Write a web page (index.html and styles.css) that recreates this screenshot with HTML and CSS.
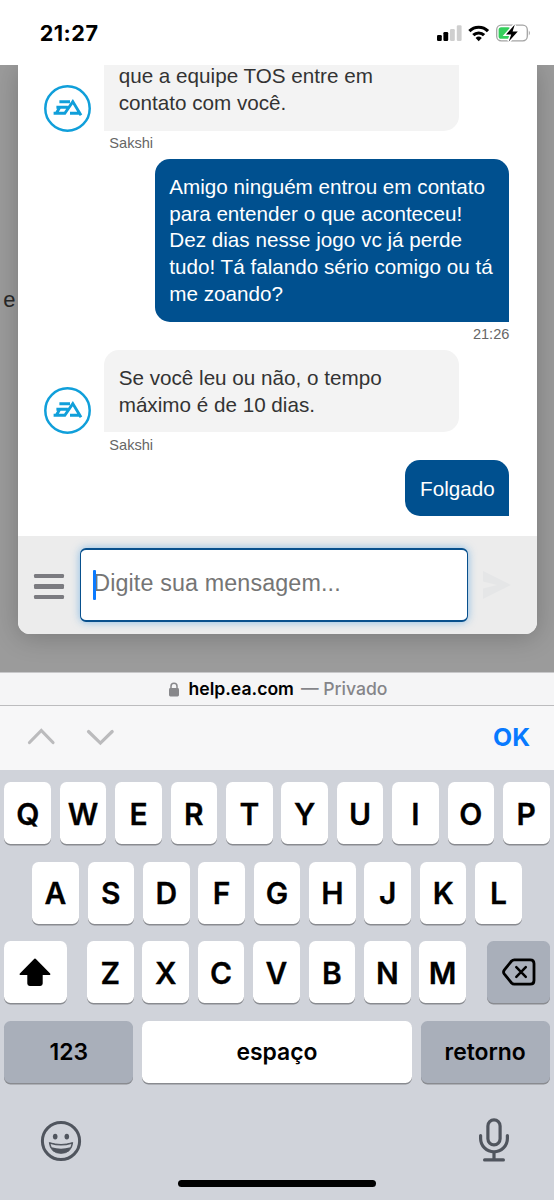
FILE: index.html
```html
<!DOCTYPE html>
<html lang="pt-BR">
<head>
<meta charset="utf-8">
<title>help.ea.com</title>
<link rel="stylesheet" href="styles.css">
</head>
<body>
<svg class="defs" width="0" height="0">
  <symbol id="ea" viewBox="0 0 47 47">
    <circle cx="23.5" cy="23.5" r="22.2" fill="#fff" stroke="#109fda" stroke-width="2.5"/>
    <path d="M15.4 16.8H26M12.4 22.2H23.8M15.8 22.2L12.3 28.2M9.6 28.2H20.8L28.8 16.6L37 30.3M26 28.2H35" fill="none" stroke="#109fda" stroke-width="2.9"/>
  </symbol>
</svg>
<div class="phone">
  <header class="status">
    <div class="clock">21:27</div>
    <svg class="indicators" width="98" height="24" viewBox="434 21 98 24">
      <rect x="437" y="35" width="4.8" height="6" rx="1.2"/>
      <rect x="443.4" y="32" width="4.8" height="9" rx="1.2"/>
      <rect x="450" y="29" width="4.8" height="12" rx="1.2" fill="#cfcfcf"/>
      <rect x="456.8" y="25.3" width="4.8" height="15.7" rx="1.2" fill="#cfcfcf"/>
      <g fill="none" stroke="#000" stroke-width="3.2">
        <path d="M469.4 31.1A13.2 13.2 0 0 1 488 31.1"/>
        <path d="M473.3 35.2A7.7 7.7 0 0 1 484.1 35.2"/>
      </g>
      <path d="M475.6 38Q478.7 35.2 481.8 38L478.7 41.2Z"/>
      <rect x="496.7" y="25.2" width="30.6" height="15.6" rx="4.5" fill="#fff" stroke="#a4a4a4" stroke-width="1.3"/>
      <path d="M528.8 30.5Q531 33 528.8 35.5Z" fill="#a4a4a4"/>
      <rect x="498.6" y="27.2" width="12" height="11.6" rx="2.6" fill="#34cf5c"/>
      <path d="M514.8 24.6L506 34.6H511.2L508.8 41.6L517.8 31.4H512.6Z" stroke="#fff" stroke-width="3"/>
      <path d="M514.8 24.6L506 34.6H511.2L508.8 41.6L517.8 31.4H512.6Z"/>
    </svg>
  </header>

  <main class="web">
    <div class="behind">e</div>
    <section class="panel">
      <div class="messages">
        <div class="row">
          <svg class="avatar"><use href="#ea"/></svg>
          <p class="bubble agent">que a equipe TOS entre em<br>contato com você.</p>
        </div>
        <div class="meta agent-name">Sakshi</div>
        <p class="bubble me">Amigo ninguém entrou em contato<br>para entender o que aconteceu!<br>Dez dias nesse jogo vc já perde<br>tudo! Tá falando sério comigo ou tá<br>me zoando?</p>
        <div class="meta time">21:26</div>
        <div class="row">
          <svg class="avatar"><use href="#ea"/></svg>
          <p class="bubble agent">Se você leu ou não, o tempo<br>máximo é de 10 dias.</p>
        </div>
        <div class="meta agent-name">Sakshi</div>
        <p class="bubble me short">Folgado</p>
      </div>
      <div class="composer">
        <div class="menu"><i></i><i></i><i></i></div>
        <div class="input"><span class="caret"></span><span class="placeholder">Digite sua mensagem...</span></div>
        <svg class="send" width="30" height="30" viewBox="0 0 30 30"><path d="M1 1L29 15L1 29V18.5L15 15L1 11.5Z" fill="#e5e6e7"/></svg>
      </div>
    </section>
  </main>

  <div class="urlbar">
    <svg width="12" height="15" viewBox="0 0 12 15"><rect x="1" y="6" width="10" height="8.4" rx="1.4" fill="#88888b"/><path d="M3 6.5V4.2a3 3 0 0 1 6 0V6.5" fill="none" stroke="#88888b" stroke-width="1.5"/></svg>
    <span class="host">help.ea.com</span><span class="private">— Privado</span>
  </div>
  <div class="toolbar">
    <svg width="90" height="20" viewBox="0 0 90 20"><path d="M2.5 15.5L14.3 3.5L26 15.5M61.5 4.5L73.4 16.1L85.2 4.5" fill="none" stroke="#bbbbbd" stroke-width="3.2" stroke-linecap="round"/></svg>
    <span class="ok">OK</span>
  </div>

  <div class="keyboard">
    <div class="keys">
      <b>Q</b><b>W</b><b>E</b><b>R</b><b>T</b><b>Y</b><b>U</b><b>I</b><b>O</b><b>P</b>
    </div>
    <div class="keys">
      <b>A</b><b>S</b><b>D</b><b>F</b><b>G</b><b>H</b><b>J</b><b>K</b><b>L</b>
    </div>
    <div class="keys split">
      <b class="wide"><svg width="34" height="30" viewBox="0 0 34 30"><path d="M17 2.5L31.5 17.2H23.8V26.5Q23.8 28 22.3 28H11.7Q10.2 28 10.2 26.5V17.2H2.5Z" stroke="#000" stroke-width="1.8" stroke-linejoin="round"/></svg></b>
      <div class="letters"><b>Z</b><b>X</b><b>C</b><b>V</b><b>B</b><b>N</b><b>M</b></div>
      <b class="wide dark"><svg width="34" height="28" viewBox="0 0 34 28" fill="none" stroke="#000" stroke-linecap="round" stroke-linejoin="round"><path d="M12.2 1.8H28.2Q32 1.8 32 5.6V22.4Q32 26.2 28.2 26.2H12.2Q10.8 26.2 9.6 25L2.4 16.2Q.7 14 2.4 11.8L9.6 3Q10.8 1.8 12.2 1.8Z" stroke-width="2.8"/><path d="M14.3 9.2L23.8 18.8M23.8 9.2L14.3 18.8" stroke-width="2.5"/></svg></b>
    </div>
    <div class="keys words">
      <b class="side dark">123</b><b class="space">espaço</b><b class="side dark">retorno</b>
    </div>
    <div class="bottom">
      <svg width="42" height="42" viewBox="0 0 42 42"><circle cx="21" cy="21" r="18.6" fill="none" stroke="#50555e" stroke-width="3"/><ellipse cx="15.2" cy="16.6" rx="2.3" ry="2.9" fill="#50555e"/><ellipse cx="26.8" cy="16.6" rx="2.3" ry="2.9" fill="#50555e"/><path d="M9.3 22.6Q21 26.4 32.7 22.6Q31.5 33.3 21 33.3Q10.5 33.3 9.3 22.6Z" fill="#50555e" stroke="#50555e" stroke-width="1" stroke-linejoin="round"/><path d="M10.6 24Q21 27.2 31.4 24L30.4 27.3Q21 30 11.6 27.3Z" fill="#d0d3da"/></svg>
      <svg width="32" height="46" viewBox="0 0 32 46" fill="none" stroke="#50555e" stroke-width="3.2" stroke-linecap="round"><rect x="9.9" y="2.8" width="12.2" height="25" rx="6.1"/><path d="M2.6 18.5V21.5A13.4 13.4 0 0 0 29.4 21.5V18.5M16 35V42.5M6.6 42.9H25.4"/></svg>
    </div>
    <div class="home"></div>
  </div>
</div>
</body>
</html>
```
FILE: styles.css
```css
* { box-sizing: border-box; }
body { margin: 0; background: #fff; font-family: "Liberation Sans", Arial, sans-serif; }
.defs { display: block; position: absolute; }
.phone { width: 554px; height: 1200px; overflow: hidden; display: flex; flex-direction: column; }

.status { height: 65px; flex: none; display: flex; justify-content: space-between; padding: 21px 22px 0 39.7px; font-family: Inter, sans-serif; }
.clock { font-size: 21.6px; font-weight: 700; line-height: 25px; letter-spacing: .5px; }
.indicators { display: block; }

.web { height: 607px; flex: none; display: flex; align-items: flex-start; background: #9b9b9b; overflow: hidden; }
.behind { width: 18px; flex: none; padding: 222px 0 0 3.2px; font-size: 22px; line-height: 25px; color: #292929; }
.panel { width: 518.6px; height: 569px; border-radius: 0 0 12px 12px; background: #fff; box-shadow: 0 3px 26px rgba(0,0,0,.22); overflow: hidden; display: flex; flex-direction: column; }
.messages { height: 471px; flex: none; overflow: hidden; display: flex; flex-direction: column; justify-content: flex-end; padding: 0 27.2px 19.6px 26.3px; }
.row { display: flex; align-items: flex-end; gap: 12.7px; flex: none; }
.avatar { width: 47px; height: 47px; flex: none; margin-bottom: -1.2px; }
.bubble { margin: 0; padding: 15.1px 14.7px 14.2px; flex: none; width: 354.8px; border-radius: 15px; font-size: 20.67px; line-height: 26.67px; white-space: nowrap; }
.agent { background: #f3f3f3; color: #333; border-bottom-left-radius: 0; }
.me { background: #00508f; color: #fff; border-bottom-right-radius: 0; align-self: flex-end; }
.short { width: 104px; }
.meta { height: 28.1px; flex: none; padding-top: 4.5px; font-size: 14.6px; line-height: 17px; color: #666; }
.agent-name { padding-left: 65px; }
.time { text-align: right; }

.composer { height: 98px; display: flex; align-items: center; background: #ececec; padding-left: 15.7px; }
.menu { width: 30.3px; display: flex; flex-direction: column; gap: 6.2px; margin-top: 3px; }
.menu i { height: 4.1px; border-radius: 1.2px; background: #7b7b80; }
.input { width: 388.6px; height: 74px; margin-left: 15.8px; display: flex; align-items: center; background: #fff; border: 1.6px solid #08508d; border-top-width: 2px; border-bottom-width: 2px; border-radius: 6px; box-shadow: 0 0 9px rgba(80,160,225,.65); padding-left: 12px; }
.caret { width: 3px; height: 29.5px; border-radius: 1px; background: #0a7aff; margin-right: -2.6px; position: relative; z-index: 1; }
.placeholder { font-size: 23.3px; letter-spacing: .13px; line-height: 26px; color: #757575; margin-top: -5px; }
.send { margin-left: 14px; }

.urlbar { height: 34px; flex: none; display: flex; align-items: center; background: #f5f5f6; border-top: 1px solid #c8c8ca; border-bottom: 1px solid #bcbcbe; padding-left: 168px; font: 600 17.6px/20px Inter, sans-serif; }
.host { margin-left: 8.5px; }
.private { margin-left: 7px; font-weight: 500; color: #858589; }
.toolbar { height: 64px; flex: none; display: flex; align-items: center; justify-content: space-between; background: #f7f7f8; padding: 0 24px 2px 27px; }
.ok { font: 700 24.8px/30px Inter, sans-serif; color: #087aff; }

.keyboard { height: 430px; flex: none; display: flex; flex-direction: column; background: #d0d3da; padding: 12px 4.3px 0; font-family: Inter, sans-serif; }
.keys { display: flex; justify-content: center; gap: 8.8px; height: 62px; margin-bottom: 17.7px; flex: none; }
.keys b { width: 46.6px; height: 62px; flex: none; border-radius: 6.5px; background: #fff; box-shadow: 0 1.4px 0 #898b90; display: flex; align-items: center; justify-content: center; padding-top: 1px; font-size: 30px; font-weight: 600; -webkit-text-stroke: .3px #000; line-height: 36px; color: #000; }
.letters { display: flex; gap: 8.8px; }
.split { justify-content: space-between; }
.split .letters { margin-right: 1px; }
.keys .wide { width: 62.3px; padding: 0; }
.keys .dark { background: #a9afba; }
.words { margin-bottom: 0; }
.keys .side { width: 129.3px; }
.keys .space { width: 269.5px; }
.keys.words b { font-size: 22.9px; padding: 0 0 1px; -webkit-text-stroke-width: 0; }
.bottom { display: flex; justify-content: space-between; align-items: flex-start; padding: 34px 39.5px 0 35.5px; height: 97px; flex: none; }
.bottom svg:first-child { margin-top: 3px; }
.home { width: 198px; height: 7.2px; margin: 0 auto; border-radius: 4px; background: #000; }
```
